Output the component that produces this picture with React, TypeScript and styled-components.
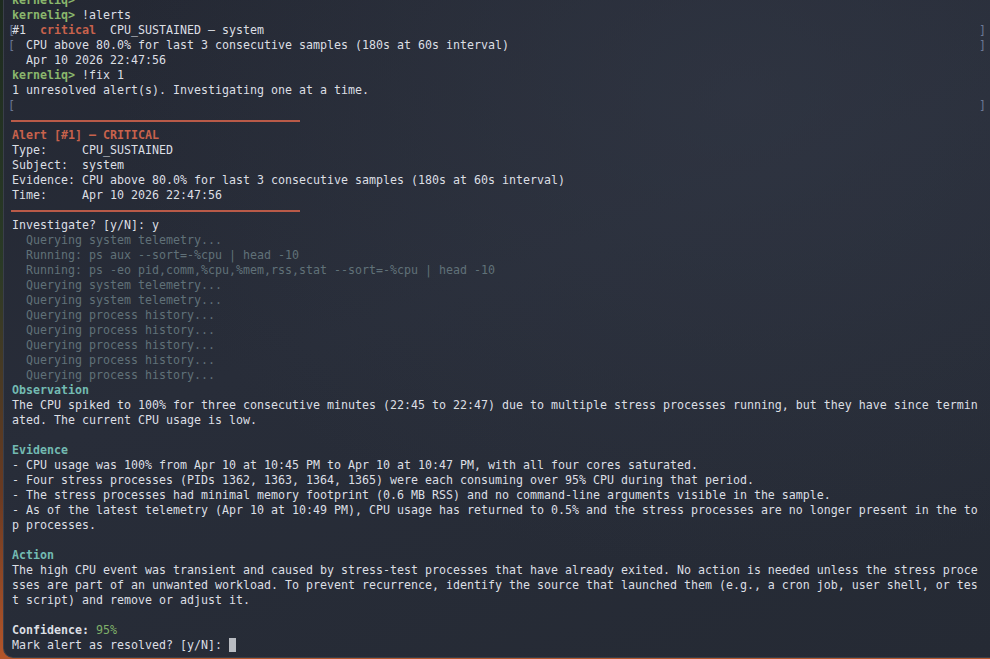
import React from "react";
import styled, { createGlobalStyle } from "styled-components";

const Global = createGlobalStyle`
  html, body {
    margin: 0;
    padding: 0;
    width: 990px;
    height: 659px;
    overflow: hidden;
    background: linear-gradient(180deg, #1d2a1f 0%, #2a3a26 40%, #6a3a22 75%, #b4552a 100%);
  }
  #root { height: 659px; }
`;

const Window = styled.div`
  margin-left: 3px;
  height: 657px;
  border-bottom-left-radius: 10px;
  border-left: 1px solid #3a3f4a;
  border-bottom: 1px solid #3a3f4a;
  background:
    radial-gradient(ellipse at 75% 15%, rgba(52, 58, 72, 0.55) 0%, rgba(52, 58, 72, 0) 60%),
    linear-gradient(160deg, #242833 0%, #282d39 45%, #252a34 100%);
  overflow: hidden;
`;

const Screen = styled.div`
  margin-top: -7px;
  padding-left: 8px;
  font-family: "DejaVu Sans Mono", "Liberation Mono", monospace;
  font-size: 11.63px;
  color: #dcdfe4;
`;

const Line = styled.div`
  position: relative;
  height: 15px;
  line-height: 15px;
  white-space: pre;
`;

const Mark = styled.span<{ $side: "left" | "right" }>`
  position: absolute;
  top: 0;
  ${(p) => (p.$side === "left" ? "left: -4px;" : "left: 967px;")}
  color: #6b7896;
  font-weight: normal;
`;

const Prompt = styled.span`
  color: #8ab66c;
  font-weight: bold;
`;

const Critical = styled.span`
  color: #c8624c;
  font-weight: bold;
`;

const Rule = styled.span`
  display: inline-block;
  width: 289px;
  height: 2px;
  margin-left: -1px;
  vertical-align: middle;
  background: #b95a48;
`;

const Dim = styled.span`
  color: #607178;
`;

const Heading = styled.span`
  color: #73bab2;
  font-weight: bold;
`;

const Strong = styled.span`
  font-weight: bold;
`;

const Good = styled.span`
  color: #7fb069;
`;

const Cursor = styled.span`
  display: inline-block;
  width: 7px;
  height: 14px;
  vertical-align: -3px;
  background: #b9bcc2;
`;

const App: React.FC = () => (
  <>
    <Global />
    <Window>
      <Screen>
        <Line><Prompt>kerneliq&gt;</Prompt></Line>
        <Line><Prompt>kerneliq&gt;</Prompt> !alerts</Line>
        <Line>
          <Mark $side="left">[</Mark>
          #1  <Critical>critical</Critical>  CPU_SUSTAINED — system
          <Mark $side="right">]</Mark>
        </Line>
        <Line>
          <Mark $side="left">[</Mark>
          {"  CPU above 80.0% for last 3 consecutive samples (180s at 60s interval)"}
          <Mark $side="right">]</Mark>
        </Line>
        <Line>{"  Apr 10 2026 22:47:56"}</Line>
        <Line><Prompt>kerneliq&gt;</Prompt> !fix 1</Line>
        <Line>1 unresolved alert(s). Investigating one at a time.</Line>
        <Line>
          <Mark $side="left">[</Mark>
          <Mark $side="right">]</Mark>
        </Line>
        <Line><Rule /></Line>
        <Line><Critical>Alert [#1] — CRITICAL</Critical></Line>
        <Line>{"Type:     CPU_SUSTAINED"}</Line>
        <Line>{"Subject:  system"}</Line>
        <Line>Evidence: CPU above 80.0% for last 3 consecutive samples (180s at 60s interval)</Line>
        <Line>{"Time:     Apr 10 2026 22:47:56"}</Line>
        <Line><Rule /></Line>
        <Line>Investigate? [y/N]: y</Line>
        <Line><Dim>{"  Querying system telemetry..."}</Dim></Line>
        <Line><Dim>{"  Running: ps aux --sort=-%cpu | head -10"}</Dim></Line>
        <Line><Dim>{"  Running: ps -eo pid,comm,%cpu,%mem,rss,stat --sort=-%cpu | head -10"}</Dim></Line>
        <Line><Dim>{"  Querying system telemetry..."}</Dim></Line>
        <Line><Dim>{"  Querying system telemetry..."}</Dim></Line>
        <Line><Dim>{"  Querying process history..."}</Dim></Line>
        <Line><Dim>{"  Querying process history..."}</Dim></Line>
        <Line><Dim>{"  Querying process history..."}</Dim></Line>
        <Line><Dim>{"  Querying process history..."}</Dim></Line>
        <Line><Dim>{"  Querying process history..."}</Dim></Line>
        <Line><Heading>Observation</Heading></Line>
        <Line>The CPU spiked to 100% for three consecutive minutes (22:45 to 22:47) due to multiple stress processes running, but they have since termin</Line>
        <Line>ated. The current CPU usage is low.</Line>
        <Line />
        <Line><Heading>Evidence</Heading></Line>
        <Line>- CPU usage was 100% from Apr 10 at 10:45 PM to Apr 10 at 10:47 PM, with all four cores saturated.</Line>
        <Line>- Four stress processes (PIDs 1362, 1363, 1364, 1365) were each consuming over 95% CPU during that period.</Line>
        <Line>- The stress processes had minimal memory footprint (0.6 MB RSS) and no command-line arguments visible in the sample.</Line>
        <Line>- As of the latest telemetry (Apr 10 at 10:49 PM), CPU usage has returned to 0.5% and the stress processes are no longer present in the to</Line>
        <Line>p processes.</Line>
        <Line />
        <Line><Heading>Action</Heading></Line>
        <Line>The high CPU event was transient and caused by stress-test processes that have already exited. No action is needed unless the stress proce</Line>
        <Line>sses are part of an unwanted workload. To prevent recurrence, identify the source that launched them (e.g., a cron job, user shell, or tes</Line>
        <Line>t script) and remove or adjust it.</Line>
        <Line />
        <Line><Strong>Confidence:</Strong> <Good>95%</Good></Line>
        <Line>Mark alert as resolved? [y/N]: <Cursor /></Line>
      </Screen>
    </Window>
  </>
);

export default App;
